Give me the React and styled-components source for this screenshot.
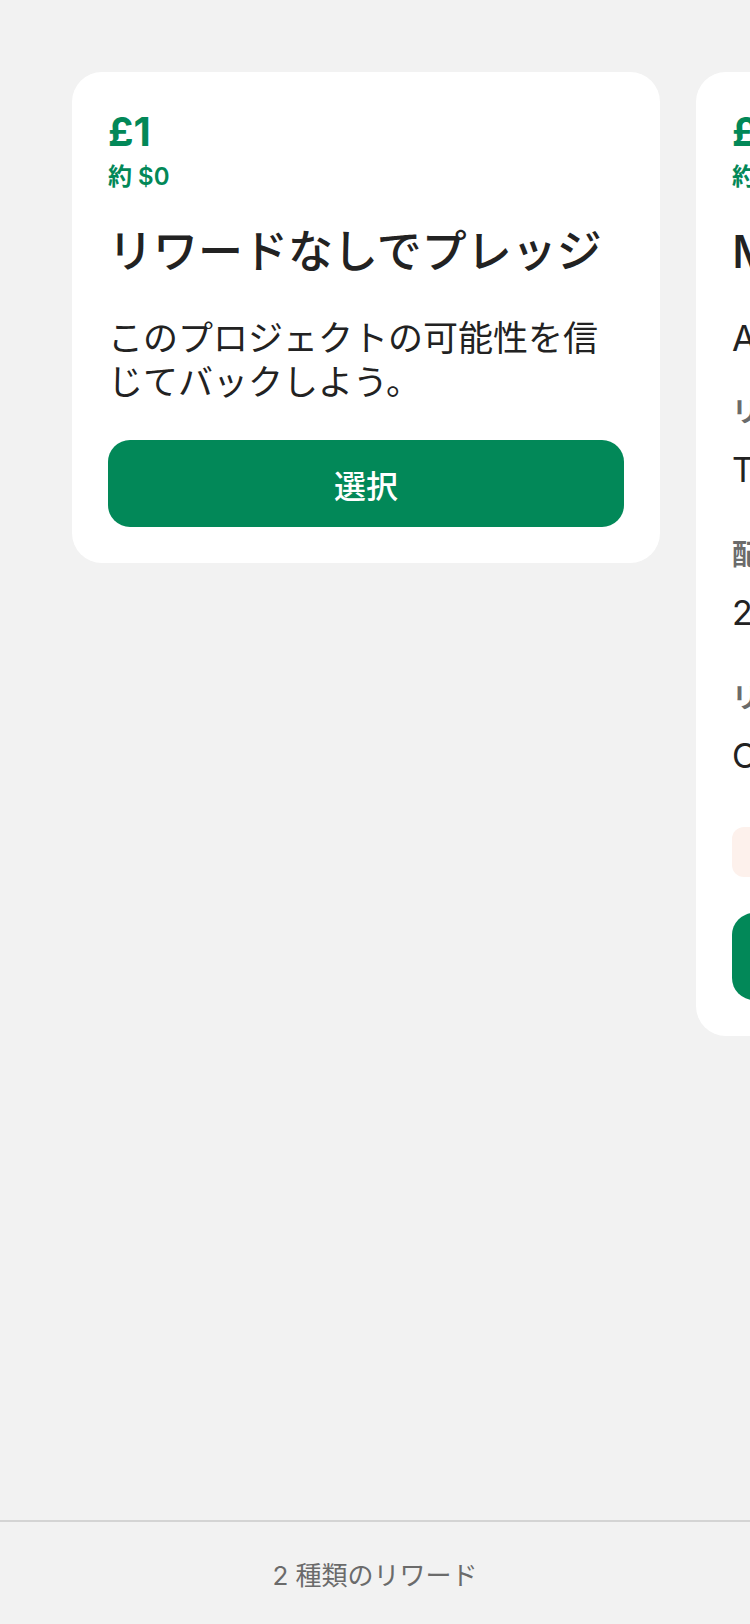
import React from 'react';
import styled, { createGlobalStyle } from 'styled-components';

const rewards = [
  {
    id: 1,
    amount: '£1',
    converted: '約 $0',
    title: 'リワードなしでプレッジ',
    body: 'このプロジェクトの可能性を信じてバックしよう。',
  },
  {
    id: 2,
    amount: '£25',
    converted: '約 $32',
    title: 'Mini Art Book',
    body: 'A5サイズのミニアートブック',
    details: [
      { label: 'リワード内容', value: 'The Mini Art Book' },
      { label: '配送予定日', value: '2025年3月' },
      { label: 'リワードの発送先', value: 'Certain countries only' },
    ],
    notice: '残り 12 件',
  },
];

const App = () => {
  return (
    <StyledPage>
      <GlobalStyle />
      <StyledTrack>
        {rewards.map((reward) => (
          <StyledCard key={reward.id}>
            <StyledAmount>{reward.amount}</StyledAmount>
            <StyledConverted>{reward.converted}</StyledConverted>
            <StyledTitle>{reward.title}</StyledTitle>
            <StyledBody>{reward.body}</StyledBody>
            {reward.details && (
              <StyledDetails>
                {reward.details.map((d) => (
                  <div key={d.label}>
                    <StyledLabel>{d.label}</StyledLabel>
                    <StyledValue>{d.value}</StyledValue>
                  </div>
                ))}
              </StyledDetails>
            )}
            {reward.notice && <StyledNotice>{reward.notice}</StyledNotice>}
            <StyledButton>選択</StyledButton>
          </StyledCard>
        ))}
      </StyledTrack>
      <StyledFooter>2 種類のリワード</StyledFooter>
    </StyledPage>
  );
};

export default App;

const GlobalStyle = createGlobalStyle`
  html, body {
    margin: 0;
    padding: 0;
    background: #f2f2f2;
  }
  body {
    font-family: Inter, "Noto Sans CJK JP", sans-serif;
    -webkit-font-smoothing: antialiased;
  }
`;

const StyledPage = styled.div`
  display: flex;
  flex-direction: column;
  height: 1624px;
  overflow: hidden;
  background: #f2f2f2;
`;

const StyledTrack = styled.main`
  flex: 1;
  display: flex;
  align-items: flex-start;
  gap: 36px;
  padding: 72px 0 0 72px;
  overflow: hidden;
`;

const StyledCard = styled.section`
  flex: 0 0 588px;
  box-sizing: border-box;
  display: flex;
  flex-direction: column;
  padding: 36px;
  background: #ffffff;
  border-radius: 30px;
`;

const StyledAmount = styled.div`
  font-size: 40px;
  line-height: 48px;
  font-weight: 700;
  color: #028858;
`;

const StyledConverted = styled.div`
  margin-top: 5px;
  font-size: 24px;
  line-height: 32px;
  font-weight: 600;
  color: #028858;
`;

const StyledTitle = styled.h2`
  margin: 30px 0 0;
  font-size: 45px;
  line-height: 58px;
  font-weight: 500;
  color: #222222;
  white-space: nowrap;
`;

const StyledBody = styled.p`
  margin: 35px 0 0;
  font-size: 35px;
  line-height: 44px;
  font-weight: 400;
  color: #222222;
`;

const StyledDetails = styled.div`
  display: flex;
  flex-direction: column;
  gap: 45px;
  margin-top: 34px;
`;

const StyledLabel = styled.div`
  font-size: 28px;
  line-height: 36px;
  font-weight: 700;
  color: #6b6b6b;
`;

const StyledValue = styled.div`
  margin-top: 18px;
  font-size: 34px;
  line-height: 44px;
  color: #222222;
  white-space: nowrap;
`;

const StyledNotice = styled.div`
  display: flex;
  align-items: center;
  height: 50px;
  margin-top: 49px;
  padding: 0 24px;
  border-radius: 12px;
  background: #fdf1ec;
  font-size: 26px;
  color: #c4432b;
`;

const StyledButton = styled.button`
  height: 87px;
  margin-top: 36px;
  border: none;
  border-radius: 22px;
  background: #028858;
  color: #ffffff;
  font-family: Inter, "Noto Sans CJK JP", sans-serif;
  font-size: 32px;
  font-weight: 500;
`;

const StyledFooter = styled.footer`
  flex: 0 0 104px;
  display: flex;
  align-items: center;
  justify-content: center;
  border-top: 2px solid #d4d4d4;
  box-sizing: border-box;
  font-size: 26px;
  color: #6b6b6b;
`;
